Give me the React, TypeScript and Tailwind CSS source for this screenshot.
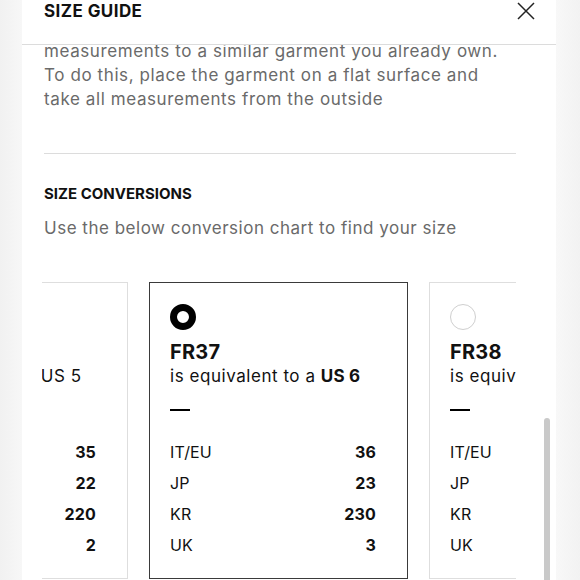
const cards = [
  { fr: "FR36", us: "US 5", rows: [["IT/EU", "35"], ["JP", "22"], ["KR", "220"], ["UK", "2"]], selected: false },
  { fr: "FR37", us: "US 6", rows: [["IT/EU", "36"], ["JP", "23"], ["KR", "230"], ["UK", "3"]], selected: true },
  { fr: "FR38", us: "US 7", rows: [["IT/EU", "37"], ["JP", "24"], ["KR", "240"], ["UK", "4"]], selected: false },
];

const font = { fontFamily: "Inter, Roboto, 'Liberation Sans', sans-serif" };

export default function App() {
  return (
    <div className="w-[580px] h-[580px] flex overflow-hidden bg-[#f4f4f4]" style={font}>
      <div className="w-[22px] shrink-0 bg-gradient-to-r from-[#f1f1f1] to-[#f7f7f7]" />
      <div className="w-[534px] shrink-0 bg-white flex flex-col relative">
        {/* Header */}
        <div className="h-[45px] shrink-0 border-b border-[#dcdcdc] flex justify-between items-start pl-[22px] pr-[20px] bg-white z-10">
          <h1 className="text-[17px] leading-[22px] font-bold text-[#111] tracking-[0.025em]">SIZE GUIDE</h1>
          <svg width="20" height="20" viewBox="0 0 20 20" className="mt-[1px]">
            <path d="M2 2 L18 18 M18 2 L2 18" stroke="#222" strokeWidth="1.5" fill="none" />
          </svg>
        </div>

        {/* Body */}
        <div className="flex-1 overflow-hidden pl-[22px] pr-[40px]">
          <p className="-mt-[6px] text-[17px] leading-[24px] text-[#6a6a6a] tracking-[0.035em] whitespace-nowrap">
            measurements to a similar garment you already own.
            <br />
            To do this, place the garment on a flat surface and
            <br />
            take all measurements from the outside
          </p>
          <div className="mt-[42px] border-t border-[#dcdcdc]" />
          <h2 className="mt-[30px] text-[15px] leading-[20px] font-bold text-[#111]">SIZE CONVERSIONS</h2>
          <p className="mt-[12px] text-[17px] leading-[24px] text-[#6a6a6a] tracking-[0.03em]">
            Use the below conversion chart to find your size
          </p>

          {/* Carousel */}
          <div className="mt-[42px] -ml-[2px] overflow-hidden">
            <div className="flex gap-[21px] -ml-[173px]">
              {cards.map((c) => (
                <div
                  key={c.fr}
                  className={`w-[259px] h-[297px] shrink-0 border pt-[21px] pl-[20px] pr-[31px] ${
                    c.selected ? "border-[#3a3a3a]" : "border-[#dedede]"
                  }`}
                >
                  {c.selected ? (
                    <div className="w-[26px] h-[26px] rounded-full border-[7px] border-black" />
                  ) : (
                    <div className="w-[26px] h-[26px] rounded-full border border-[#cfcfcf]" />
                  )}
                  <div className="mt-[9px] text-[20px] leading-[26px] font-bold text-[#111] tracking-[0.01em]">{c.fr}</div>
                  <div className="text-[17px] leading-[23px] text-[#111] tracking-[0.032em] whitespace-nowrap">
                    is equivalent to a{" "}
                    <span className={c.selected ? "font-bold tracking-[0.01em]" : ""}>{c.us}</span>
                  </div>
                  <div className="mt-[21px] w-[20px] h-[2px] bg-black" />
                  <div className="mt-[25px] flex flex-col">
                    {c.rows.map(([k, v]) => (
                      <div key={k} className="h-[31px] flex justify-between items-center text-[16px] text-[#111] tracking-[0.01em]">
                        <span>{k}</span>
                        <span className="font-bold">{v}</span>
                      </div>
                    ))}
                  </div>
                </div>
              ))}
            </div>
          </div>
        </div>

        {/* Scrollbar */}
        <div className="absolute right-[6px] top-[418px] bottom-0 w-[6px] rounded-t-full bg-[#c9c9c9]" />
      </div>
      <div className="flex-1 bg-gradient-to-r from-[#f8f8f8] to-[#f2f2f2]" />
    </div>
  );
}
